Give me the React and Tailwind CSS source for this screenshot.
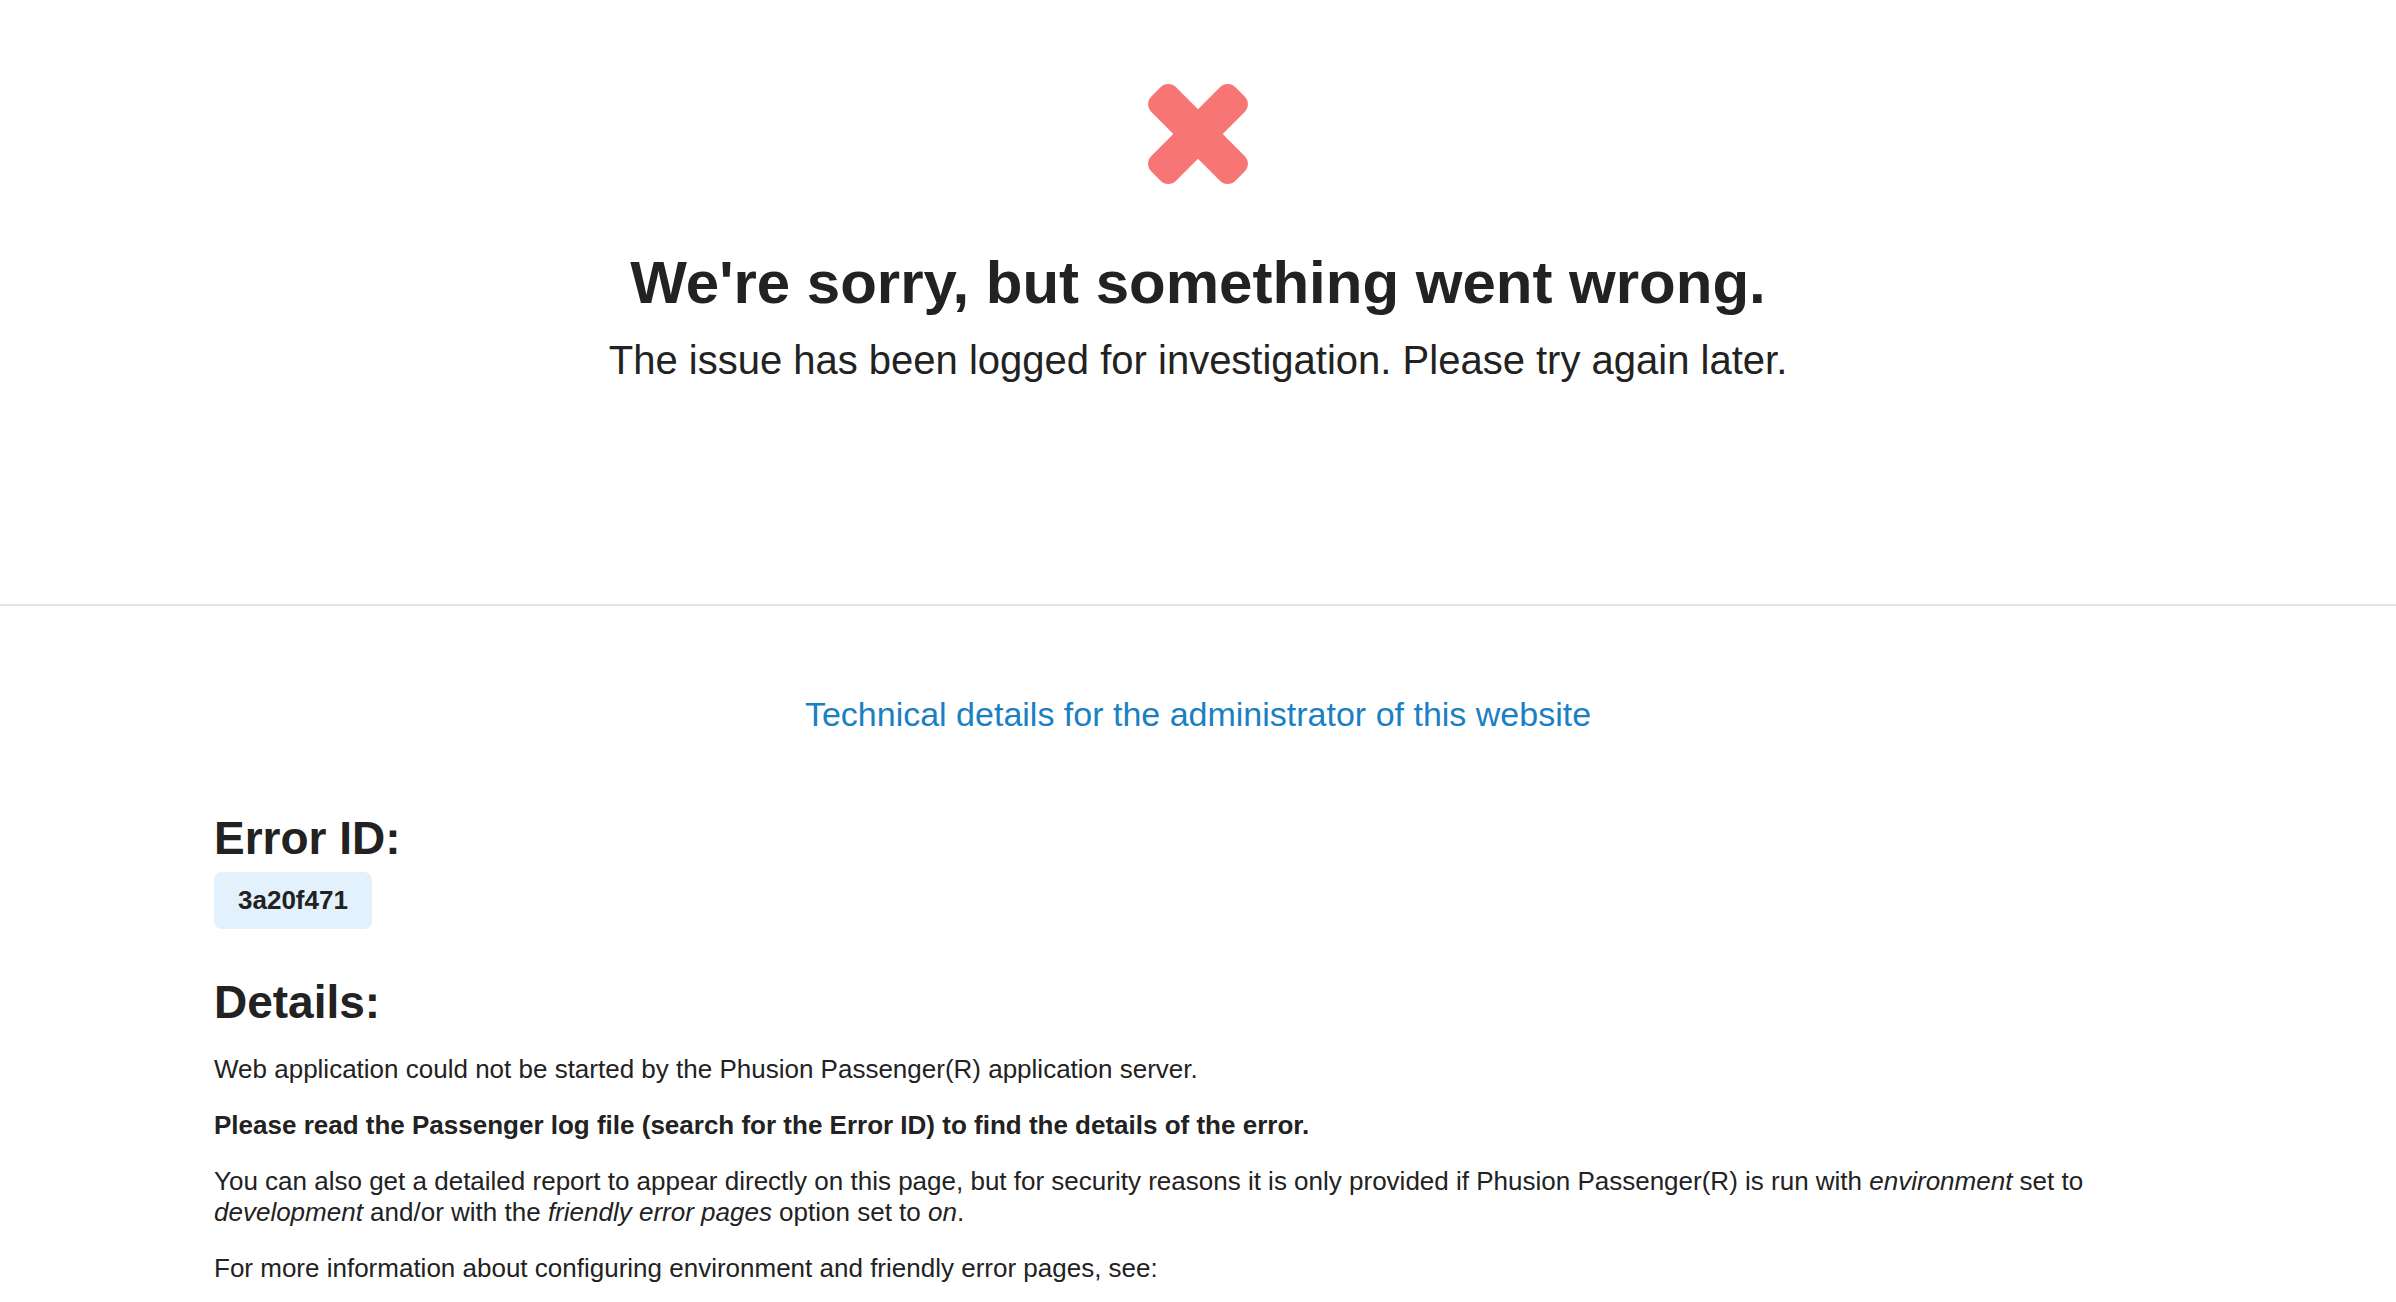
import React from "react";

function CrossIcon() {
  return (
    <svg width="100" height="100" viewBox="0 0 100 100" className="block">
      <rect x="-9.5" y="32.5" width="119" height="35" rx="11" fill="#f87575" transform="rotate(45 50 50)" />
      <rect x="-9.5" y="32.5" width="119" height="35" rx="11" fill="#f87575" transform="rotate(-45 50 50)" />
    </svg>
  );
}

export default function App() {
  return (
    <div className="min-h-screen bg-white text-[#222222] font-['Liberation_Sans',Arial,sans-serif]">
      <section className="flex flex-col items-center pt-[84px] pb-[220px]">
        <CrossIcon />
        <h1 className="mt-[63px] text-[60px] leading-[72px] font-bold">We're sorry, but something went wrong.</h1>
        <p className="mt-[17px] text-[40px] leading-[48px]">The issue has been logged for investigation. Please try again later.</p>
      </section>
      <div className="h-[2px] bg-[#e4e4e4]" />
      <section className="px-[214px] pb-10">
        <div className="mt-[88px] text-center">
          <a className="text-[34px] leading-[40px] text-[#1a80c4]">Technical details for the administrator of this website</a>
        </div>
        <h2 className="mt-[77px] text-[46px] leading-[54px] font-bold">Error ID:</h2>
        <div className="mt-[7px] inline-flex h-[57px] items-center rounded-[8px] bg-[#e3f1fc] px-6 text-[26px] font-bold">3a20f471</div>
        <h2 className="mt-[46px] text-[46px] leading-[54px] font-bold">Details:</h2>
        <div className="mt-[25px] text-[26px] leading-[31px]">
          <p className="mb-[25px]">Web application could not be started by the Phusion Passenger(R) application server.</p>
          <p className="mb-[25px] font-bold">Please read the Passenger log file (search for the Error ID) to find the details of the error.</p>
          <p className="mb-[25px]">
            You can also get a detailed report to appear directly on this page, but for security reasons it is only provided if Phusion Passenger(R) is run with <em>environment</em> set to <em>development</em> and/or with the <em>friendly error pages</em> option set to <em>on</em>.
          </p>
          <p className="mb-[25px]">For more information about configuring environment and friendly error pages, see:</p>
        </div>
      </section>
    </div>
  );
}
